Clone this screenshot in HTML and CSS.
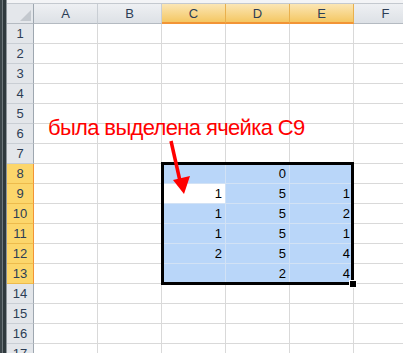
FILE: index.html
```html
<!DOCTYPE html>
<html lang="ru">
<head>
<meta charset="utf-8">
<link rel="stylesheet" href="styles.css">
</head>
<body>
<div class="window">
  <div class="edge"></div>
  <div class="sheet">
    <div class="topstrip"></div>
    <div class="row head">
      <div class="corner"><span class="tri"></span></div>
      <div class="ch">A</div><div class="ch">B</div><div class="ch on">C</div><div class="ch on">D</div><div class="ch on">E</div><div class="ch">F</div>
    </div>
    <div class="row"><div class="rh">1</div><div class="c"></div><div class="c"></div><div class="c"></div><div class="c"></div><div class="c"></div><div class="c"></div></div>
    <div class="row"><div class="rh">2</div><div class="c"></div><div class="c"></div><div class="c"></div><div class="c"></div><div class="c"></div><div class="c"></div></div>
    <div class="row"><div class="rh">3</div><div class="c"></div><div class="c"></div><div class="c"></div><div class="c"></div><div class="c"></div><div class="c"></div></div>
    <div class="row"><div class="rh">4</div><div class="c"></div><div class="c"></div><div class="c"></div><div class="c"></div><div class="c"></div><div class="c"></div></div>
    <div class="row"><div class="rh">5</div><div class="c"></div><div class="c"></div><div class="c"></div><div class="c"></div><div class="c"></div><div class="c"></div></div>
    <div class="row"><div class="rh">6</div><div class="c"></div><div class="c"></div><div class="c"></div><div class="c"></div><div class="c"></div><div class="c"></div></div>
    <div class="row"><div class="rh">7</div><div class="c"></div><div class="c"></div><div class="c"></div><div class="c"></div><div class="c"></div><div class="c"></div></div>
    <div class="row"><div class="rh on">8</div><div class="c"></div><div class="c"></div><div class="c s"></div><div class="c s">0</div><div class="c s"></div><div class="c"></div></div>
    <div class="row"><div class="rh on">9</div><div class="c"></div><div class="c"></div><div class="c active">1</div><div class="c s">5</div><div class="c s">1</div><div class="c"></div></div>
    <div class="row"><div class="rh on">10</div><div class="c"></div><div class="c"></div><div class="c s">1</div><div class="c s">5</div><div class="c s">2</div><div class="c"></div></div>
    <div class="row"><div class="rh on">11</div><div class="c"></div><div class="c"></div><div class="c s">1</div><div class="c s">5</div><div class="c s">1</div><div class="c"></div></div>
    <div class="row"><div class="rh on">12</div><div class="c"></div><div class="c"></div><div class="c s">2</div><div class="c s">5</div><div class="c s">4</div><div class="c"></div></div>
    <div class="row"><div class="rh on">13</div><div class="c"></div><div class="c"></div><div class="c s"></div><div class="c s">2</div><div class="c s">4</div><div class="c"></div></div>
    <div class="row"><div class="rh">14</div><div class="c"></div><div class="c"></div><div class="c"></div><div class="c"></div><div class="c"></div><div class="c"></div></div>
    <div class="row"><div class="rh">15</div><div class="c"></div><div class="c"></div><div class="c"></div><div class="c"></div><div class="c"></div><div class="c"></div></div>
    <div class="row"><div class="rh">16</div><div class="c"></div><div class="c"></div><div class="c"></div><div class="c"></div><div class="c"></div><div class="c"></div></div>
    <div class="row"><div class="rh">17</div><div class="c"></div><div class="c"></div><div class="c"></div><div class="c"></div><div class="c"></div><div class="c"></div></div>
  </div>

  <div class="selection"></div>
  <div class="handle"></div>
  <div class="note">была выделена ячейка C9</div>
  <svg class="arrow" width="403" height="353" viewBox="0 0 403 353">
    <line x1="171" y1="141" x2="180" y2="181" stroke="#ff0000" stroke-width="3.5"/>
    <polygon points="173,180 190,176 184,194" fill="#ff0000"/>
  </svg>
</div>
</body>
</html>
```

FILE: styles.css
```css
html, body {
  margin: 0;
  padding: 0;
  background: #ffffff;
  overflow: hidden;
}

.window {
  position: relative;
  width: 403px;
  height: 353px;
  display: flex;
  overflow: hidden;
  font-family: "Liberation Sans", Arial, sans-serif;
}

.edge {
  width: 7px;
  flex: none;
  background: linear-gradient(to right, #3b4549 0 2px, #6f787c 2px 3px, #2f393d 3px 6px, #8d959a 6px 7px);
}

.sheet {
  flex: 1;
  display: flex;
  flex-direction: column;
}

.topstrip {
  height: 4px;
  flex: none;
  box-sizing: border-box;
  background: #f3f4f6;
  border-bottom: 1px solid #c4c9cf;
}

.row {
  display: flex;
  height: 20px;
  flex: none;
}

.corner, .rh {
  width: 27px;
  flex: none;
  box-sizing: border-box;
  border-right: 1px solid #9ea7b0;
}

.corner {
  position: relative;
  background: #e4e7eb;
  border-bottom: 1px solid #b4bac1;
}

.tri {
  position: absolute;
  right: 2px;
  bottom: 2px;
  width: 0;
  height: 0;
  border-left: 11px solid transparent;
  border-bottom: 11px solid #c3c8ce;
}

.ch {
  width: 64px;
  flex: none;
  box-sizing: border-box;
  background: linear-gradient(#eef0f3, #dde1e6);
  border-right: 1px solid #c9ced4;
  border-bottom: 1px solid #b4bac1;
  text-align: center;
  font-size: 13px;
  line-height: 19px;
  color: #2c3d55;
}

.ch.on {
  background: linear-gradient(#fbe6b5, #f4c763);
  border-right-color: #e9b04d;
  border-bottom: 2px solid #f29436;
}

.rh {
  background: #e3e6ea;
  border-bottom: 1px solid #c9ced4;
  text-align: center;
  font-size: 13px;
  line-height: 19px;
  color: #2c3d55;
}

.rh.on {
  background: #fcd66b;
  border-bottom-color: #edbb4c;
  border-right: 1px solid #f29436;
}

.c {
  width: 64px;
  flex: none;
  box-sizing: border-box;
  border-right: 1px solid #d9d9d9;
  border-bottom: 1px solid #d9d9d9;
  display: flex;
  justify-content: flex-end;
  align-items: flex-end;
  padding: 0 3px 2px 0;
  font-size: 13px;
  line-height: 15px;
  color: #000000;
}

.c.s {
  background: #b9d6f9;
  border-right-color: #d2e2f5;
  border-bottom-color: #d2e2f5;
}

.c.active {
  background: #ffffff;
  border-right-color: #d2e2f5;
  border-bottom-color: #d2e2f5;
}

.selection {
  position: absolute;
  left: 161px;
  top: 162px;
  width: 193px;
  height: 123px;
  box-sizing: border-box;
  border: 3px solid #000000;
}

.handle {
  position: absolute;
  left: 350px;
  top: 281px;
  width: 6px;
  height: 6px;
  box-sizing: border-box;
  background: #000000;
  outline: 1px solid #ffffff;
}

.note {
  position: absolute;
  left: 48px;
  top: 117px;
  font-size: 22px;
  line-height: 22px;
  letter-spacing: -0.65px;
  color: #ff0000;
  white-space: nowrap;
}

.arrow {
  position: absolute;
  left: 0;
  top: 0;
  pointer-events: none;
}
```
